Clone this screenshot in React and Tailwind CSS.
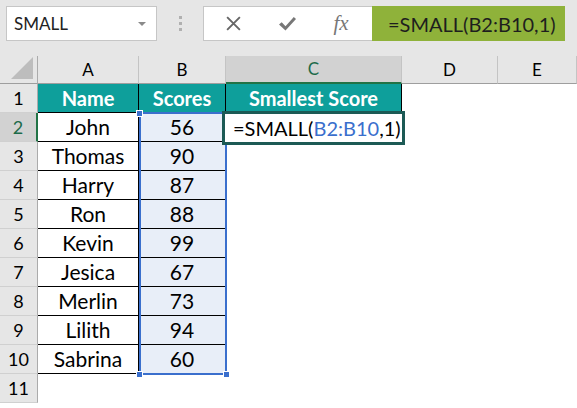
import React from 'react';

const rows = [
  ['John', 56],
  ['Thomas', 90],
  ['Harry', 87],
  ['Ron', 88],
  ['Kevin', 99],
  ['Jesica', 67],
  ['Merlin', 73],
  ['Lilith', 94],
  ['Sabrina', 60],
];

const font = { fontFamily: 'Lato, "Open Sans", sans-serif' };

function ColHead({ label, active }) {
  return (
    <div
      className={`flex items-center justify-center text-[17px] border-r border-[#c4c4c4] ${
        active
          ? 'bg-[#d2d2d2] text-[#1d6b4a] border-b-2 border-b-[#217346]'
          : 'bg-[#e6e6e6] text-black border-b border-b-[#9e9e9e]'
      }`}
    >
      {label}
    </div>
  );
}

function RowHead({ n, active }) {
  return (
    <div
      className={`flex items-center justify-center text-[18px] border-b border-[#d0d0d0] ${
        active
          ? 'bg-[#d2d2d2] text-[#1d6b4a] border-r-2 border-r-[#217346]'
          : 'bg-[#e6e6e6] text-black border-r border-r-[#ababab]'
      }`}
    >
      {n}
    </div>
  );
}

export default function App() {
  return (
    <div className="w-[577px] h-[408px] overflow-hidden bg-white text-black" style={font}>
      {/* formula bar */}
      <div className="h-[56px] bg-[#e6e6e6] flex items-start pt-[6px]">
        <div className="ml-[6px] w-[151px] h-[35px] bg-white border border-[#c6c6c6] flex items-center pl-[7px] pr-[10px]">
          <span className="text-[17px] flex-1 text-[#222]">SMALL</span>
          <span className="w-0 h-0 border-l-[4px] border-r-[4px] border-t-[4px] border-l-transparent border-r-transparent border-t-[#8a8a8a]" />
        </div>
        <div className="w-[46px] h-[35px] flex flex-col items-center justify-center gap-[3px]">
          <span className="w-[3px] h-[3px] bg-[#b0b0b0]" />
          <span className="w-[3px] h-[3px] bg-[#b0b0b0]" />
          <span className="w-[3px] h-[3px] bg-[#b0b0b0]" />
        </div>
        <div className="w-[169px] h-[35px] bg-white border border-[#c6c6c6] border-r-0 flex items-center">
          <div className="w-[58px] flex justify-center">
            <svg width="17" height="17" viewBox="0 0 16 16">
              <path d="M2 2 L14 14 M14 2 L2 14" stroke="#666" strokeWidth="1.8" fill="none" />
            </svg>
          </div>
          <div className="w-[50px] flex justify-center">
            <svg width="19" height="16" viewBox="0 0 18 16">
              <path d="M0.5 8.5 L3.2 6.2 L7 10.2 L15.3 1 L17.5 3 L7 14.5 Z" fill="#777" />
            </svg>
          </div>
          <div className="w-[58px] flex justify-center">
            <span className="italic text-[21px] text-[#777]" style={{ fontFamily: '"Liberation Serif", serif' }}>
              fx
            </span>
          </div>
        </div>
        <div className="w-[193px] h-[35px] bg-[#8fb23a] flex items-center pl-[16px] text-[20px] text-[#1e1e1e]">
          =SMALL(B2:B10,1)
        </div>
      </div>

      {/* sheet */}
      <div className="relative">
        <div className="grid grid-cols-[38px_101px_87px_176px_96px_79px] grid-rows-[28px_repeat(11,29px)]">
          <div className="bg-[#e6e6e6] border-r border-[#ababab] border-b border-b-[#9e9e9e] flex items-end justify-end p-[4px]">
            <svg width="22" height="22" viewBox="0 0 22 22">
              <path d="M22 0 L22 22 L0 22 Z" fill="#bdbdbd" />
            </svg>
          </div>
          <ColHead label="A" />
          <ColHead label="B" />
          <ColHead label="C" active />
          <ColHead label="D" />
          <ColHead label="E" />

          {/* row 1 */}
          <RowHead n={1} />
          <div className="bg-[#0e9f9b] text-white font-bold text-[20px] flex items-center justify-center border-r border-b border-black">Name</div>
          <div className="bg-[#0e9f9b] text-white font-bold text-[20px] flex items-center justify-center border-r border-b border-black">Scores</div>
          <div className="bg-[#0e9f9b] text-white font-bold text-[20px] flex items-center justify-center border-r border-b border-black">Smallest Score</div>
          <div />
          <div />

          {rows.map(([name, score], i) => (
            <React.Fragment key={name}>
              <RowHead n={i + 2} active={i === 0} />
              <div className="text-[21px] flex items-center justify-center border-r border-b border-black">{name}</div>
              <div className="text-[21px] bg-[#e8eef8] flex items-center justify-center border-r border-b border-black">{score}</div>
              <div />
              <div />
              <div />
            </React.Fragment>
          ))}

          <RowHead n={11} />
          <div />
          <div />
          <div />
          <div />
          <div />
        </div>

        {/* selection B2:B10 */}
        <div className="absolute left-[139px] top-[56px] w-[88px] h-[263px] border-2 border-[#3a6fcd] pointer-events-none" />
        <div className="absolute left-[136px] top-[54px] w-[7px] h-[7px] bg-[#3a6fcd] border border-white" />
        <div className="absolute left-[136px] top-[315px] w-[7px] h-[7px] bg-[#3a6fcd] border border-white" />
        <div className="absolute left-[223px] top-[315px] w-[7px] h-[7px] bg-[#3a6fcd] border border-white" />

        {/* active cell C2 */}
        <div className="absolute left-[222px] top-[55px] w-[183px] h-[34px] border-[3px] border-[#1c5a55] bg-white flex items-center pl-[8px] text-[20px]">
          <span>=SMALL(</span>
          <span className="text-[#3a6fcd]">B2:B10</span>
          <span>,1)</span>
          <span className="ml-[2px] w-[1.5px] h-[26px] bg-black" />
        </div>
      </div>
    </div>
  );
}
